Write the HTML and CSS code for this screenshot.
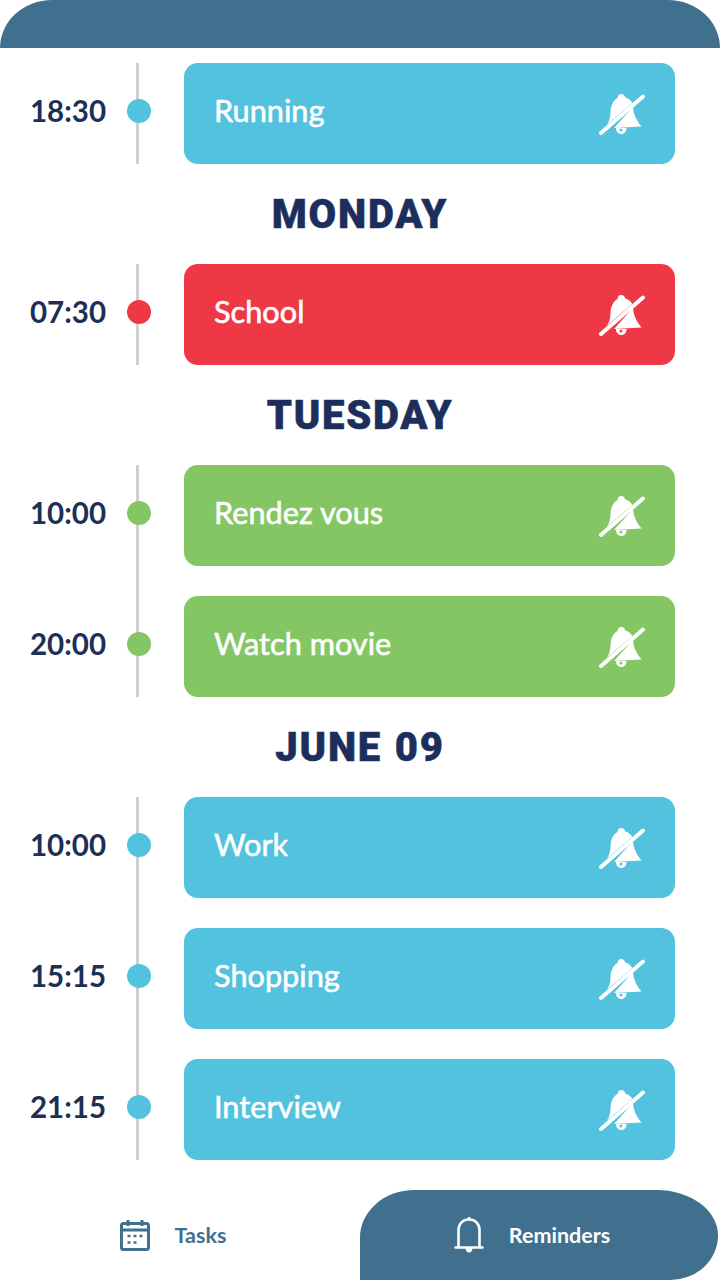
FILE: index.html
```html
<!DOCTYPE html>
<html lang="en">
<head>
  <meta charset="UTF-8">
  <title>Reminders</title>
  <link rel="stylesheet" href="styles.css">
</head>
<body>

  <svg class="defs" width="0" height="0" aria-hidden="true">
    <symbol id="muted" viewBox="0 0 46 44">
      <path fill="#fff" d="M22 2c2.400 0 4 1.500 4.300 3.600 3 .9 5.400 2.700 7 5.400L7.500 33c2.800-3.500 3.800-7 4-13 .3-6.500 2.600-11.500 7-14 .3-2 1.100-4 3.500-4z"/>
      <path fill="#fff" d="M34 15c.4 7 3.500 13.500 8.500 19.500L15 36z"/>
      <path fill="#fff" d="M17 36h10.500c0 3.500-2 6-5.200 6S17 39.500 17 36z"/>
      <circle cx="22" cy="38" r="1.500" fill="currentColor"/>
      <path stroke="#fff" stroke-width="4" stroke-linecap="round" d="M2 41 44 4.500"/>
    </symbol>
  </svg>

  <header class="top-bar"></header>

  <main class="agenda">
    <section class="group">
      <div class="row">
        <span class="time">18:30</span>
        <span class="dot blue"></span>
        <div class="card blue"><span class="title">Running</span><svg class="mute"><use href="#muted"/></svg></div>
      </div>
    </section>

    <h2 class="day">MONDAY</h2>

    <section class="group">
      <div class="row">
        <span class="time">07:30</span>
        <span class="dot red"></span>
        <div class="card red"><span class="title">School</span><svg class="mute"><use href="#muted"/></svg></div>
      </div>
    </section>

    <h2 class="day">TUESDAY</h2>

    <section class="group">
      <div class="row">
        <span class="time">10:00</span>
        <span class="dot green"></span>
        <div class="card green"><span class="title">Rendez vous</span><svg class="mute"><use href="#muted"/></svg></div>
      </div>
      <div class="row">
        <span class="time">20:00</span>
        <span class="dot green"></span>
        <div class="card green"><span class="title">Watch movie</span><svg class="mute"><use href="#muted"/></svg></div>
      </div>
    </section>

    <h2 class="day">JUNE 09</h2>

    <section class="group">
      <div class="row">
        <span class="time">10:00</span>
        <span class="dot blue"></span>
        <div class="card blue"><span class="title">Work</span><svg class="mute"><use href="#muted"/></svg></div>
      </div>
      <div class="row">
        <span class="time">15:15</span>
        <span class="dot blue"></span>
        <div class="card blue"><span class="title">Shopping</span><svg class="mute"><use href="#muted"/></svg></div>
      </div>
      <div class="row">
        <span class="time">21:15</span>
        <span class="dot blue"></span>
        <div class="card blue"><span class="title">Interview</span><svg class="mute"><use href="#muted"/></svg></div>
      </div>
    </section>
  </main>

  <nav class="tabs">
    <div class="tab">
      <svg class="tab-icon" viewBox="0 0 30 32" fill="none" stroke="#41708f" stroke-width="3">
        <rect x="1.500" y="4.500" width="27" height="26" rx="2"/>
        <path d="M1.500 11h27M8 1v6M22 1v6"/>
        <path stroke-width="2.400" d="M7.500 17h3M13.500 17h3M19.500 17h3M7.500 23.500h3M13.500 23.500h3"/>
      </svg>
      <span>Tasks</span>
    </div>
    <div class="tab active">
      <svg class="tab-icon" viewBox="0 0 30 36" fill="none" stroke="#fff" stroke-width="2.600">
        <path stroke-linecap="round" d="M1.500 30.500h27M4.500 30.500V13c0-6.500 4.500-10.500 10.500-10.500S25.500 6.500 25.500 13v17.500"/>
        <path fill="#fff" stroke="none" d="M11.500 31h7c0 2.500-1.500 4.500-3.500 4.500s-3.500-2-3.500-4.500zM13.500 3V1.500c0-2 3-2 3 0V3z"/>
      </svg>
      <span>Reminders</span>
    </div>
  </nav>

</body>
</html>
```

FILE: styles.css
```css
* {
  box-sizing: border-box;
}
body {
  margin: 0;
  width: 720px;
  height: 1280px;
  overflow: hidden;
  background: #fff;
  font-family: Lato, "Open Sans", sans-serif;
  display: flex;
  flex-direction: column;
}
.defs {
  position: absolute;
}
.top-bar {
  height: 48px;
  background: #41708f;
  border-radius: 54px 54px 0 0 / 50px 50px 0 0;
}
.agenda {
  flex: 1;
  padding-top: 15px;
}
.group {
  display: flex;
  flex-direction: column;
  gap: 30px;
  padding-right: 45px;
  background: linear-gradient(#cfcfd3, #cfcfd3) 136px 0 / 3px 100% no-repeat;
}
.row {
  display: flex;
  align-items: center;
  height: 101px;
}
.time {
  width: 106px;
  margin-bottom: 7px;
  text-align: right;
  font-size: 29.5px;
  font-weight: 700;
  color: #1c2f55;
}
.dot {
  width: 24px;
  height: 24px;
  margin: 0 33px 5px 21px;
  border-radius: 50%;
}
.card {
  flex: 1;
  height: 100%;
  display: flex;
  align-items: center;
  justify-content: space-between;
  padding: 0 30px;
  border-radius: 14px;
}
.title {
  margin-bottom: 7px;
  font-size: 30.7px;
  color: #fff;
  -webkit-text-stroke: 0.6px #fff;
}
.blue {
  background: #52c2de;
  color: #52c2de;
}
.red {
  background: #ef3846;
  color: #ef3846;
}
.green {
  background: #85c664;
  color: #85c664;
}
.mute {
  width: 46px;
  height: 44px;
  margin-top: 1px;
}
.day {
  height: 100px;
  margin: 0;
  display: flex;
  align-items: center;
  justify-content: center;
  font-family: Roboto, sans-serif;
  font-size: 40px;
  font-weight: 900;
  letter-spacing: 1.800px;
  word-spacing: 1px;
  color: #1c2f5c;
  -webkit-text-stroke: 0.5px #1c2f5c;
}
.tabs {
  height: 90px;
  display: flex;
}
.tab {
  width: 360px;
  padding-right: 14px;
  display: flex;
  align-items: center;
  justify-content: center;
  gap: 25px;
  font-size: 21.5px;
  font-weight: 700;
  color: #41708f;
}
.tab.active {
  width: 358px;
  background: #41708f;
  border-radius: 55px 62px 48px 0 / 48px 46px 45px 0;
  color: #fff;
}
.tab-icon {
  width: 30px;
  height: 36px;
}
```
